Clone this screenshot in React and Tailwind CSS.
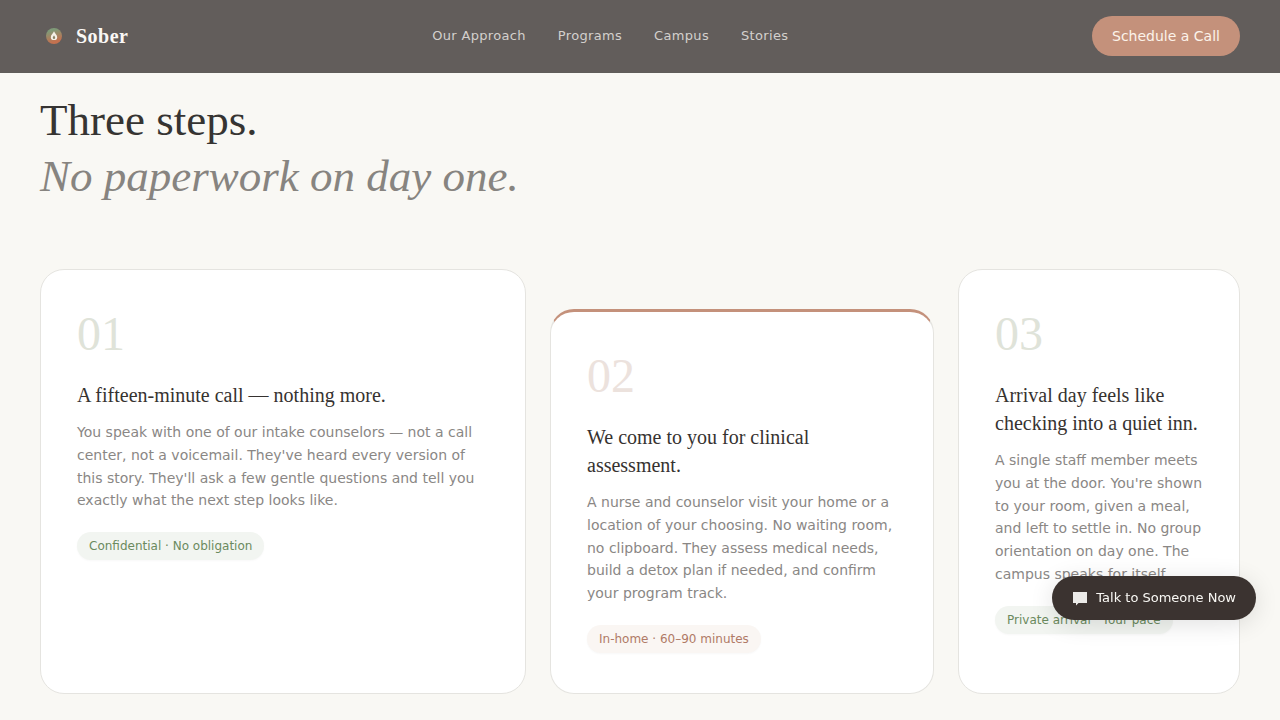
import clsx from "clsx";

const links = ["Our Approach", "Programs", "Campus", "Stories"];

const steps = [
  {
    number: "01",
    title: "A fifteen-minute call — nothing more.",
    body: "You speak with one of our intake counselors — not a call center, not a voicemail. They've heard every version of this story. They'll ask a few gentle questions and tell you exactly what the next step looks like.",
    tag: "Confidential · No obligation",
    card: "col-span-5 border-t",
    numberColor: "text-[#dfe3d9]",
    tagColor: "bg-[#f2f5f1] text-[#6b8a5e]",
  },
  {
    number: "02",
    title: "We come to you for clinical assessment.",
    body: "A nurse and counselor visit your home or a location of your choosing. No waiting room, no clipboard. They assess medical needs, build a detox plan if needed, and confirm your program track.",
    tag: "In-home · 60–90 minutes",
    card: "col-span-4 mt-10 border-t-3 border-t-[#c4917b]",
    numberColor: "text-[#ece2dd]",
    tagColor: "bg-[#faf6f3] text-[#b07a66]",
  },
  {
    number: "03",
    title: "Arrival day feels like checking into a quiet inn.",
    body: "A single staff member meets you at the door. You're shown to your room, given a meal, and left to settle in. No group orientation on day one. The campus speaks for itself.",
    tag: "Private arrival · Your pace",
    card: "col-span-3 border-t",
    numberColor: "text-[#dfe3d9]",
    tagColor: "bg-[#f2f5f1] text-[#6b8a5e]",
  },
];

function Logo() {
  return (
    <svg className="size-7" viewBox="0 0 28 28" aria-hidden="true">
      <defs>
        <linearGradient id="logo-fill" x1="0.3" y1="0" x2="0.6" y2="1">
          <stop offset="0.15" stopColor="#7f9a78" />
          <stop offset="0.85" stopColor="#c4714f" />
        </linearGradient>
      </defs>
      <circle cx="14" cy="14" r="8" fill="url(#logo-fill)" />
      <path
        d="M14 9.200c-.8 2-3.200 3.700-3.200 6a3.200 2.900 0 0 0 6.400 0C17.200 12.900 14.800 11.200 14 9.200Z"
        fill="#f5f1e8"
      />
      <path d="M14 13.200c-.4 1-1.200 1.600-1.200 2.500a1.200 1.200 0 0 0 2.400 0c0-.9-.8-1.500-1.200-2.500Z" fill="#8a8468" />
    </svg>
  );
}

function Header() {
  return (
    <header className="flex items-center justify-between border-b border-[#605d5a] bg-[#625d5b] px-10 py-4">
      <a
        href="#top"
        className="flex items-center gap-2 font-['Liberation_Serif',serif] text-xl font-semibold tracking-wide text-[#faf8f5]"
      >
        <Logo />
        Sober
      </a>
      <nav className="flex gap-8 text-[13px] tracking-wide text-[#d3d0cd]">
        {links.map((link) => (
          <a key={link} href="#top">
            {link}
          </a>
        ))}
      </nav>
      <button
        type="button"
        className="h-10 rounded-full bg-[#c4917b] px-5 text-sm text-[#fcf3ea]"
      >
        Schedule a Call
      </button>
    </header>
  );
}

function StepCard({ step }) {
  return (
    <article
      className={clsx(
        "rounded-3xl border-x border-b border-[#e5e4e0] bg-white px-9 py-10",
        step.card
      )}
    >
      <p
        className={clsx(
          "mb-[23px] font-['Liberation_Serif',serif] text-5xl leading-none",
          step.numberColor
        )}
      >
        {step.number}
      </p>
      <h3 className="mb-3 font-['Liberation_Serif',serif] text-xl text-[#363230]">
        {step.title}
      </h3>
      <p className="mb-5 text-sm leading-relaxed text-[#8a8785]">{step.body}</p>
      <span
        className={clsx(
          "flex w-fit rounded-full px-3 py-1.5 text-xs whitespace-nowrap shadow-xs shadow-black/3",
          step.tagColor
        )}
      >
        {step.tag}
      </span>
    </article>
  );
}

export default function App() {
  return (
    <div
      id="top"
      className="min-h-screen bg-[#f9f8f4] font-['DejaVu_Sans',sans-serif]"
    >
      <Header />
      <main className="px-10 pt-[19px] pb-6">
        <h2 className="mb-[65px] font-['Liberation_Serif',serif] text-[45px] leading-[56px] text-[#363432]">
          Three steps.
          <br />
          <em className="text-[#878480]">No paperwork on day one.</em>
        </h2>
        <div className="grid grid-cols-12 gap-6">
          {steps.map((step) => (
            <StepCard key={step.number} step={step} />
          ))}
        </div>
      </main>
      <button
        type="button"
        className="fixed right-6 bottom-[100px] flex h-11 items-center gap-2 rounded-full bg-[#3b3330] px-5 text-[13px] text-[#f9f8f4] shadow-[0_4px_24px] shadow-black/12"
      >
        <svg className="size-4" viewBox="0 0 16 16" fill="#ecebe8" aria-hidden="true">
          <path d="M1 2h14v11H6.500L4 15.500V13H1Z" />
        </svg>
        Talk to Someone Now
      </button>
    </div>
  );
}
